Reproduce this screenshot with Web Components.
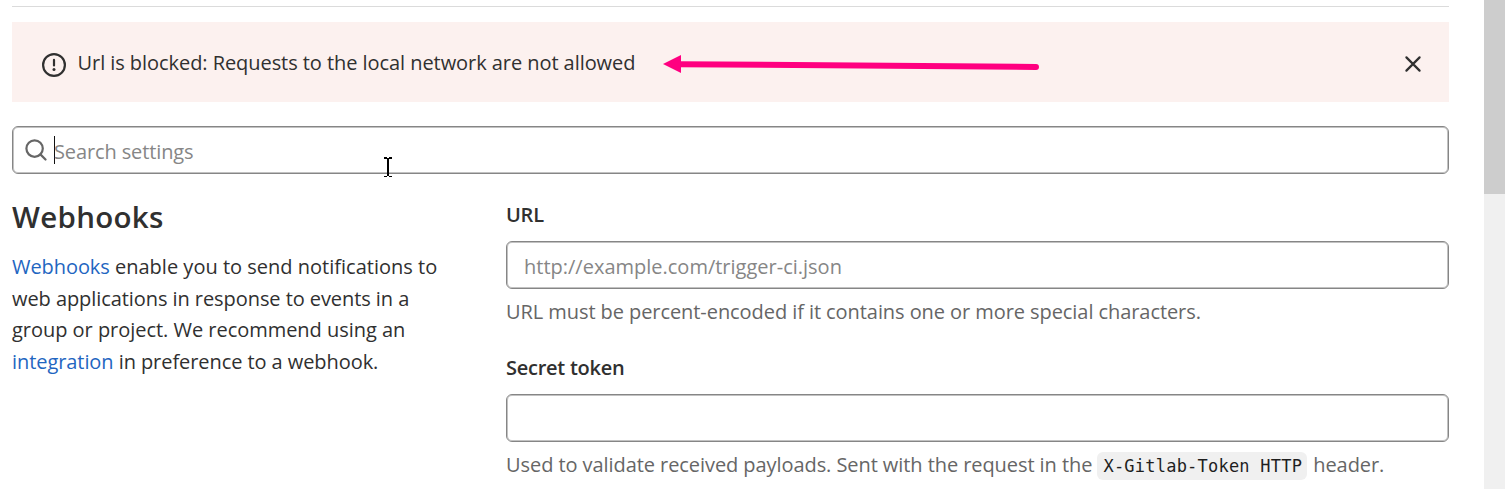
<!DOCTYPE html>
<html lang="en">
<head>
<meta charset="utf-8">
<title>Webhooks</title>
<style>
body { margin: 0; height: 489px; overflow: hidden; background: #fff; color: #303030;
  font: 20px/31.5px "Open Sans", "Noto Sans", sans-serif; letter-spacing: -0.07px; }
</style>
</head>
<body>
<settings-page></settings-page>
<script>
const define = (name, html) => customElements.define(name, class extends HTMLElement {
  constructor() {
    super();
    this.attachShadow({ mode: "open" }).innerHTML = html;
  }
});

define("page-scrollbar", `
<style>
  :host { display: block; width: 21px; height: 489px; background: #f0f0f0; }
  .thumb { height: 194px; background: #cdcdcd; }
</style>
<div class="thumb"></div>`);

define("alert-banner", `
<style>
  :host { display: flex; align-items: center; box-sizing: border-box; height: 80px;
    padding: 0 24px 0 30px; background: #fcf1ef; letter-spacing: -0.06px; }
  svg { display: block; flex: none; }
  .icon { margin: 6px 11.5px 0 0; }
  .text { flex: 1; white-space: nowrap; margin-top: 1px; }
  .close { margin-top: 4px; }
</style>
<svg class="icon" width="24" height="24" viewBox="0 0 24 24" fill="none" stroke="#303030" stroke-width="2.2">
  <circle cx="12" cy="12" r="10.9"/>
  <path d="M12 6.9v5.6" stroke-linecap="round"/>
  <circle cx="12" cy="16.6" r="1.5" fill="#303030" stroke="none"/>
</svg>
<span class="text"><slot></slot></span>
<svg class="close" width="24" height="24" viewBox="0 0 24 24" fill="none" stroke="#303030" stroke-width="2.2" stroke-linecap="round">
  <path d="M5.4 5.4l13.2 13.2M18.6 5.4L5.4 18.6"/>
</svg>`);

define("text-box", `
<style>
  :host { display: flex; align-items: center; box-sizing: border-box; height: 48px; padding: 3px 17px 0;
    border: 1px solid #868686; border-radius: 6px; box-shadow: inset 0 0 0 1px #c2c2c2;
    background: #fff; color: #868686; white-space: nowrap; letter-spacing: 0; }
</style>
<slot></slot>`);

define("search-box", `
<style>
  text-box { padding: 0 12px; letter-spacing: -0.12px; }
  svg { display: block; flex: none; margin-bottom: 1px; }
  .caret { width: 1px; height: 28px; background: #111; margin: 0 -1px 0 7px; }
  .hint { margin-top: 3px; }
</style>
<text-box>
  <svg width="22" height="22" viewBox="0 0 22 22" fill="none" stroke="#666" stroke-width="2.2">
    <circle cx="9.6" cy="9.6" r="8.2"/><path d="M15.4 15.4l5.1 5.1" stroke-linecap="round"/>
  </svg>
  <span class="caret"></span>
  <span class="hint"><slot></slot></span>
</text-box>`);

define("form-field", `
<style>
  :host { display: block; }
  .label { height: 31px; line-height: 31px; font-weight: 600; letter-spacing: -0.25px; margin-bottom: 11px; }
  .help { margin-top: 7px; color: #666; white-space: nowrap; }
</style>
<div class="label"><slot name="label"></slot></div>
<text-box><slot></slot></text-box>
<div class="help"><slot name="help"></slot></div>`);

define("code-chip", `
<style>
  :host { display: inline-block; height: 28px; line-height: 29px; padding: 0 5px 0 6px; margin: 3px 1px 0 0;
    border-radius: 6px; background: #f0f0f0; color: #1f1f1f; vertical-align: top;
    font-family: "DejaVu Sans Mono", monospace; font-size: 17px; letter-spacing: 0.22px; }
</style>
<slot></slot>`);

define("section-intro", `
<style>
  :host { display: block; }
  h4 { margin: 0; font-size: 29.5px; line-height: 40px; font-weight: 600; letter-spacing: 0.3px; }
  p { margin: 14px 0 0; white-space: nowrap; }
</style>
<h4><slot name="title"></slot></h4>
<p><slot></slot></p>`);

define("callout-arrow", `
<style>
  :host { position: absolute; left: 663px; top: 54px; width: 378px; height: 20px; }
  svg { display: block; }
</style>
<svg width="378" height="20" viewBox="0 0 378 20">
  <path d="M16 10.2L373 13" stroke="#ff0080" stroke-width="6" stroke-linecap="round"/>
  <path d="M0 9.9L18 1v18z" fill="#ff0080"/>
</svg>`);

define("text-cursor", `
<style>
  :host { position: absolute; left: 384px; top: 157px; width: 8px; height: 20px; }
  svg { display: block; }
</style>
<svg width="8" height="20" viewBox="0 0 8 20" shape-rendering="crispEdges">
  <path d="M0 0h3v1h2V0h3v2H5v17h3v1H5v-1H3v1H0v-1h3V2H0z"/>
</svg>`);

define("settings-page", `
<style>
  :host { display: flex; align-items: flex-start; justify-content: space-between; position: relative; height: 489px; }
  main { width: 1437px; margin-left: 12px; padding-top: 6px; }
  .rule { height: 1px; background: #dbdbdb; margin-bottom: 15px; }
  search-box { display: block; margin-top: 24px; }
  .columns { display: grid; grid-template-columns: 494px 943px; padding-top: 25px; }
  .fields { display: grid; gap: 24px; }
  section-intro { margin-top: -2px; }
  a { color: #1f66c1; text-decoration: none; letter-spacing: -0.07px; }
  .l1 { letter-spacing: 0.01px; }
  .l3 { letter-spacing: -0.03px; }
</style>
<main>
  <div class="rule"></div>
  <alert-banner>Url is blocked: Requests to the local network are not allowed</alert-banner>
  <search-box>Search settings</search-box>
  <div class="columns">
    <section-intro>
      <span slot="title">Webhooks</span>
      <a>Webhooks</a><span class="l1"> enable you to send notifications to</span><br>
      web applications in response to events in a<br>
      <span class="l3">group or project. We recommend using an</span><br>
      <a>integration</a> in preference to a webhook.
    </section-intro>
    <div class="fields">
      <form-field>
        <span slot="label">URL</span>
        http://example.com/trigger-ci.json
        <span slot="help">URL must be percent-encoded if it contains one or more special characters.</span>
      </form-field>
      <form-field>
        <span slot="label">Secret token</span>
        <span slot="help">Used to validate received payloads. Sent with the request in the <code-chip>X-Gitlab-Token HTTP</code-chip> header.</span>
      </form-field>
    </div>
  </div>
</main>
<page-scrollbar></page-scrollbar>
<callout-arrow></callout-arrow>
<text-cursor></text-cursor>`);
</script>
</body>
</html>
